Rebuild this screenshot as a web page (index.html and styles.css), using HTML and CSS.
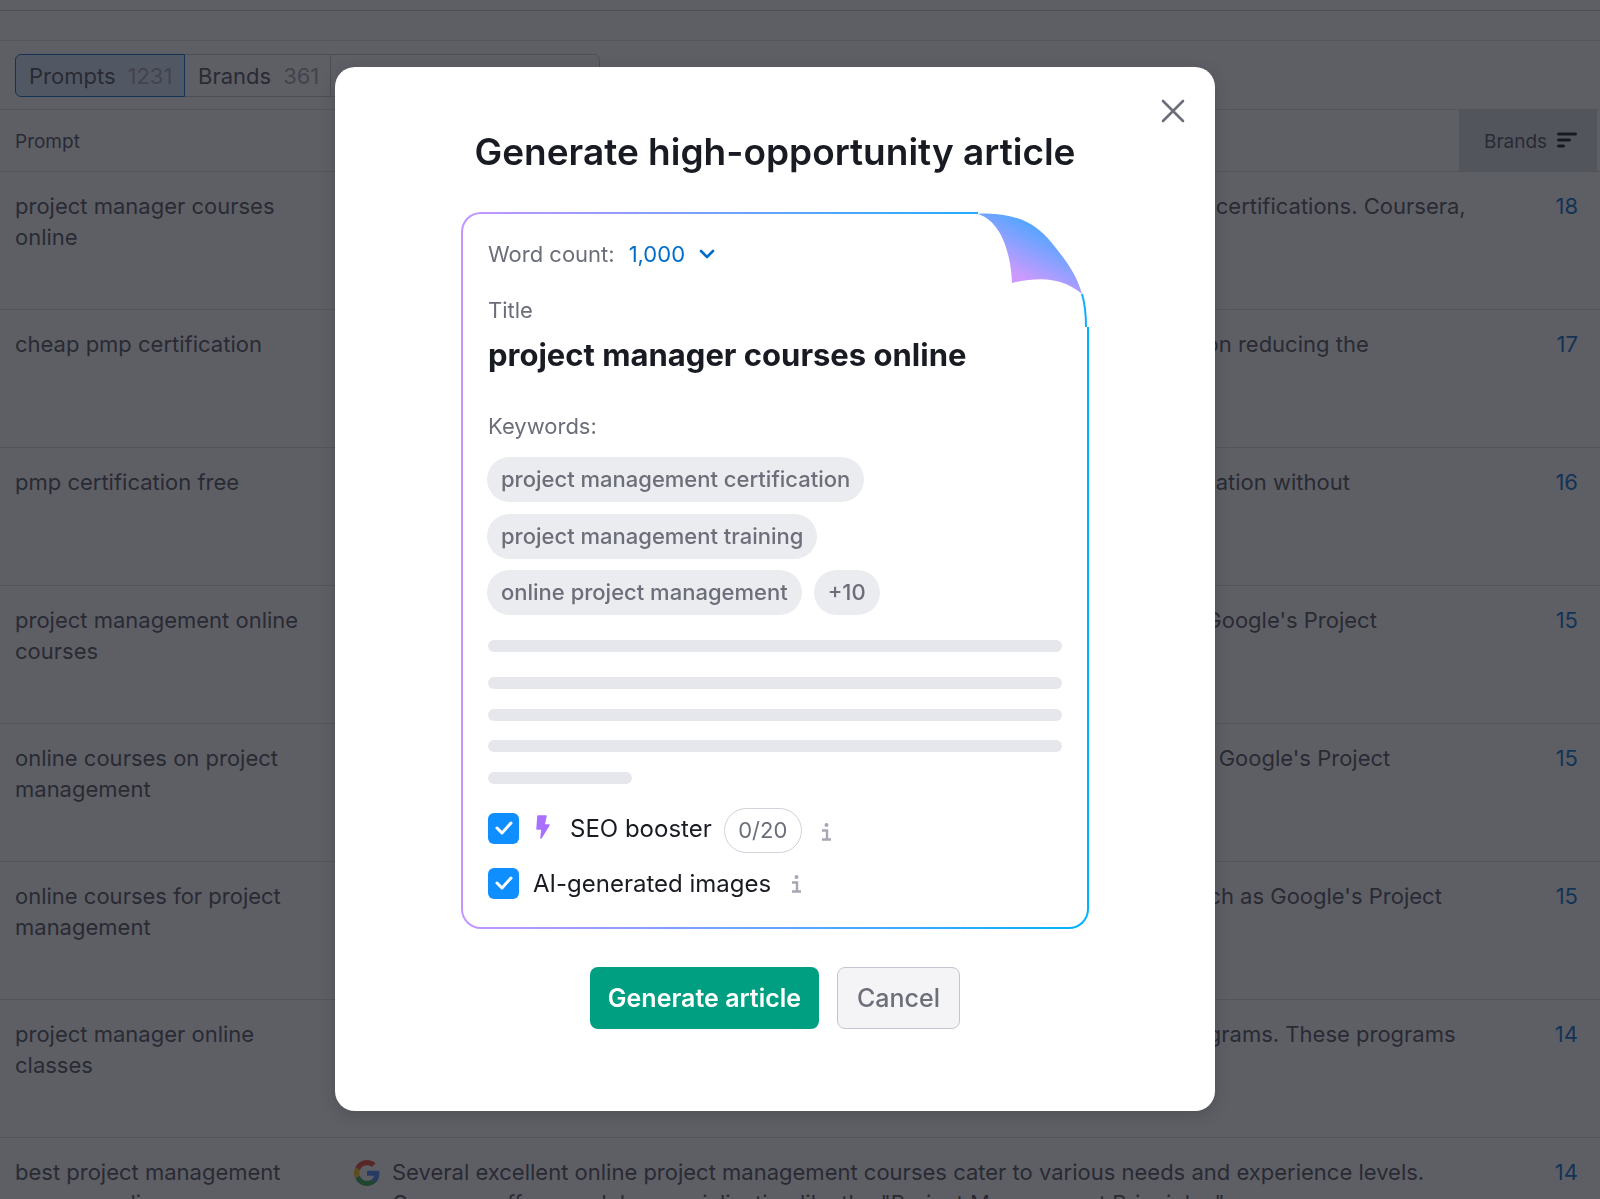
FILE: index.html
```html
<!DOCTYPE html>
<html lang="en">

<head>
  <meta charset="UTF-8">
  <title>Generate high-opportunity article</title>
  <link rel="stylesheet" href="styles.css">
</head>

<body>
  <div class="page">
    <div class="top-strip"></div>
    <div class="top-band"></div>
    <div class="tabs-row">
      <div class="tabs">
        <div class="tab tab-active">Prompts <span class="tab-count">1231</span></div>
        <div class="tab">Brands <span class="tab-count">361</span></div>
        <div class="tab tab-last">Sources</div>
      </div>
    </div>

    <div class="table-head">
      <div class="head-prompt">Prompt</div>
      <div class="head-brands">
        Brands
        <svg class="sort-icon" width="20" height="16" viewBox="0 0 20 16">
          <path d="M1.5 2h17M1.5 8h11M1.5 14h5" stroke="#16181f" stroke-width="3" stroke-linecap="round" fill="none"></path>
        </svg>
      </div>
    </div>

    <div class="row">
      <div class="prompt">project manager courses online</div>
      <div class="source"></div>
      <div class="answer">Many online platforms offer project manager courses with industry-recognized certifications. Coursera,<br>edX and Udemy all have programs</div>
      <div class="count">18</div>
    </div>
    <div class="row">
      <div class="prompt">cheap pmp certification</div>
      <div class="source"></div>
      <div class="answer">Cheap PMP certification options exist, with many training providers that focus on reducing the<br>overall cost of the exam</div>
      <div class="count">17</div>
    </div>
    <div class="row">
      <div class="prompt">pmp certification free</div>
      <div class="source"></div>
      <div class="answer">Free PMP study resources are widely available, but you cannot earn the certification without<br>paying the exam fee</div>
      <div class="count">16</div>
    </div>
    <div class="row">
      <div class="prompt">project management online courses</div>
      <div class="source"></div>
      <div class="answer">Many reputable platforms offer project management online courses, including Google's Project<br>Management Certificate</div>
      <div class="count">15</div>
    </div>
    <div class="row">
      <div class="prompt">online courses on project management</div>
      <div class="source"></div>
      <div class="answer">Online courses on project management are offered by many providers, such as Google's Project<br>Management Certificate</div>
      <div class="count">15</div>
    </div>
    <div class="row">
      <div class="prompt">online courses for project management</div>
      <div class="source"></div>
      <div class="answer">Popular online courses for project management come from many providers, such as Google's Project<br>Management Certificate</div>
      <div class="count">15</div>
    </div>
    <div class="row">
      <div class="prompt">project manager online classes</div>
      <div class="source"></div>
      <div class="answer">Several universities and platforms offer online project management degree programs. These programs<br>cover planning and scheduling<br><span class="cite">Project Management Institute, PMI</span></div>
      <div class="count">14</div>
    </div>
    <div class="row">
      <div class="prompt">best project management courses online</div>
      <div class="source">
        <svg width="26" height="26" viewBox="0 0 48 48">
          <path fill="#EA4335" d="M24 9.5c3.5 0 6.7 1.2 9.2 3.6l6.9-6.9C35.9 2.4 30.5 0 24 0 14.6 0 6.5 5.4 2.6 13.2l8 6.2C12.500 13.600 17.800 9.500 24 9.500z"></path>
          <path fill="#4285F4" d="M47 24.500c0-1.600-.1-3.100-.4-4.500H24v9h12.900c-.6 3-2.200 5.400-4.700 7.100l7.700 6C44.400 37.900 47 31.800 47 24.500z"></path>
          <path fill="#FBBC05" d="M10.500 28.600c-.5-1.400-.8-3-.8-4.600s.3-3.200.8-4.600l-8-6.200C.9 16.500 0 20.100 0 24s.9 7.500 2.600 10.800l7.900-6.200z"></path>
          <path fill="#34A853" d="M24 48c6.500 0 11.900-2.100 15.900-5.900l-7.700-6c-2.200 1.400-4.900 2.300-8.200 2.300-6.200 0-11.500-4.100-13.400-9.800l-8 6.200C6.500 42.600 14.600 48 24 48z"></path>
        </svg>
      </div>
      <div class="answer">Several excellent online project management courses cater to various needs and experience levels.<br>Coursera offers modular specialization like the "Project Management Principles"</div>
      <div class="count">14</div>
    </div>
  </div>

  <div class="overlay">
    <div class="modal">
      <svg class="close" width="24" height="24" viewBox="0 0 24 24">
        <path d="M2 2l20 20M22 2L2 22" stroke="#6c6e79" stroke-width="2.600" stroke-linecap="round" fill="none"></path>
      </svg>
      <h1 class="modal-title">Generate high-opportunity article</h1>

      <div class="card">
        <svg class="fold" width="116" height="115" viewBox="0 0 116 115">
          <defs>
            <linearGradient id="foldGrad" x1="0.35" y1="0.75" x2="0.75" y2="0.15">
              <stop offset="0" stop-color="#cc9aff"></stop>
              <stop offset="1" stop-color="#3ea8ff"></stop>
            </linearGradient>
          </defs>
          <path d="M5 0H116V115H113C112 78 94 50 78 30C62 10 40 0 5 2z" fill="#fff"></path>
          <path d="M5 2C40 0 62 10 78 30C92 47 104 63 109 82C95 70 75 62 39 71C38 45 30 10 5 2z" fill="url(#foldGrad)"></path>
          <path d="M109 82C112 92 113 100 113 115" stroke="#14aeff" stroke-width="2" fill="none"></path>
        </svg>

        <div class="word-count">
          Word count:
          <span class="word-value">1,000</span>
          <svg width="16" height="10" viewBox="0 0 16 10">
            <path d="M2 2l6 6 6-6" stroke="#006dca" stroke-width="2.600" stroke-linecap="round" stroke-linejoin="round" fill="none"></path>
          </svg>
        </div>

        <div class="label label-title">Title</div>
        <div class="article-title">project manager courses online</div>

        <div class="label label-keywords">Keywords:</div>
        <div class="chips">
          <span class="chip">project management certification</span>
          <span class="chip">project management training</span>
          <span class="chip">online project management</span>
          <span class="chip">+10</span>
        </div>

        <div class="skeleton">
          <div class="line line-first"></div>
          <div class="line"></div>
          <div class="line"></div>
          <div class="line"></div>
          <div class="line line-short"></div>
        </div>

        <div class="option">
          <span class="checkbox">
            <svg width="20" height="16" viewBox="0 0 20 16">
              <path d="M3 8l5 5 9-10" stroke="#fff" stroke-width="3" stroke-linecap="round" stroke-linejoin="round" fill="none"></path>
            </svg>
          </span>
          <svg class="bolt" width="15" height="26" viewBox="0 0 15 26">
            <path d="M2 2h8L8 11h5L5 24l1-9H1z" fill="#a970ff" stroke="#a970ff" stroke-width="1.500" stroke-linejoin="round"></path>
          </svg>
          <span class="option-text seo-text">SEO booster</span>
          <span class="pill">0/20</span>
          <svg class="info" width="10" height="18" viewBox="0 0 10 18">
            <circle cx="5.500" cy="2" r="2" fill="#a5a7b3"></circle>
            <path d="M1 7.500h5v8.500M1 16.500h9" stroke="#a5a7b3" stroke-width="2.400" fill="none"></path>
          </svg>
        </div>
        <div class="option option-images">
          <span class="checkbox">
            <svg width="20" height="16" viewBox="0 0 20 16">
              <path d="M3 8l5 5 9-10" stroke="#fff" stroke-width="3" stroke-linecap="round" stroke-linejoin="round" fill="none"></path>
            </svg>
          </span>
          <span class="option-text images-text">AI-generated images</span>
          <svg class="info info-images" width="10" height="18" viewBox="0 0 10 18">
            <circle cx="5.500" cy="2" r="2" fill="#a5a7b3"></circle>
            <path d="M1 7.500h5v8.500M1 16.500h9" stroke="#a5a7b3" stroke-width="2.400" fill="none"></path>
          </svg>
        </div>
      </div>

      <div class="buttons">
        <button class="btn btn-green">Generate article</button>
        <button class="btn btn-cancel">Cancel</button>
      </div>
    </div>
  </div>
</body>

</html>
```

FILE: styles.css
```css
* {
  margin: 0;
  padding: 0;
  box-sizing: border-box;
}

html,
body {
  width: 100%;
  height: 100%;
  overflow: hidden;
}

body {
  font-family: Inter, "Liberation Sans", sans-serif;
  font-size: 22px;
  color: #191b23;
  background: #fff;
}

/* page behind the dialog */
.page {
  height: 1199px;
  overflow: hidden;
  color: #4d4f59;
}

.top-strip {
  height: 11px;
  border-bottom: 1px solid #c4c6cf;
}

.top-band {
  height: 30px;
  border-bottom: 1px solid #e2e3e8;
}

.tabs-row {
  height: 69px;
  padding: 13px 0 0 15px;
  border-bottom: 1px solid #d8dae0;
}

.tabs {
  display: flex;
  width: 585px;
  height: 43px;
}

.tab {
  display: flex;
  align-items: center;
  gap: 12px;
  width: 146px;
  padding-left: 13px;
  border: 1px solid #c4c6cf;
  border-left: 0;
  white-space: nowrap;
}

.tab-active {
  width: 170px;
  border: 1px solid #006dca;
  border-radius: 6px 0 0 6px;
  background: #d6e8f9;
}

.tab-last {
  flex: 1;
  border-radius: 0 6px 6px 0;
}

.tab-count {
  color: #a0a2ad;
}

.table-head {
  display: flex;
  justify-content: space-between;
  height: 62px;
  font-size: 19px;
  border-bottom: 1px solid #d8dae0;
}

.head-prompt {
  padding: 20px 0 0 15px;
}

.head-brands {
  display: flex;
  gap: 10px;
  width: 138px;
  margin-right: 3px;
  padding: 20px 0 0 25px;
  background: #dbdce4;
}

.sort-icon {
  margin-top: 2px;
}

.row {
  display: grid;
  grid-template-columns: 354px 38px 1fr 100px;
  height: 138px;
  padding-top: 19px;
  line-height: 31px;
  border-bottom: 1px solid #d8dae0;
}

.prompt {
  padding: 0 34px 0 15px;
}

.source svg {
  display: block;
  margin-top: 3px;
}

.answer {
  white-space: nowrap;
}

.cite {
  border-bottom: 2px dotted #7b7d88;
}

.count {
  padding-right: 22px;
  text-align: right;
  color: #006dca;
}

/* dialog */
.overlay {
  position: fixed;
  left: 0;
  top: 0;
  width: 100%;
  height: 100%;
  padding: 67px 0 0 335px;
  background: rgba(25, 27, 35, 0.7);
}

.modal {
  position: relative;
  display: flex;
  flex-direction: column;
  align-items: center;
  width: 880px;
  height: 1044px;
  padding-top: 62px;
  border-radius: 20px;
  background: #fff;
  box-shadow: 0 4px 16px rgba(25, 27, 35, 0.2);
}

.close {
  position: absolute;
  right: 30px;
  top: 32px;
}

.modal-title {
  height: 46px;
  font-size: 37px;
  line-height: 46px;
  font-weight: 600;
  color: #191b23;
  white-space: nowrap;
}

.card {
  position: relative;
  width: 628px;
  height: 717px;
  margin-top: 37px;
  padding: 25px 25px 0;
  border: 2px solid transparent;
  border-radius: 20px;
  background: linear-gradient(#fff, #fff) padding-box, linear-gradient(90deg, #c496ff, #00b2ff) border-box;
}

.fold {
  position: absolute;
  right: -2px;
  top: -2px;
}

.word-count {
  display: flex;
  align-items: center;
  gap: 14px;
  height: 30px;
  line-height: 30px;
  color: #6c6e79;
}

.word-value {
  color: #006dca;
}

.label {
  height: 30px;
  line-height: 30px;
  color: #6c6e79;
}

.label-title {
  margin-top: 26px;
}

.article-title {
  height: 40px;
  margin-top: 10px;
  font-size: 31px;
  line-height: 40px;
  font-weight: 700;
  color: #191b23;
}

.label-keywords {
  margin-top: 36px;
}

.chips {
  display: flex;
  flex-wrap: wrap;
  gap: 11.500px 12px;
  width: 440px;
  margin: 16px 0 0 -1px;
}

.chip {
  height: 45px;
  padding: 0 14px;
  border-radius: 23px;
  line-height: 45px;
  font-weight: 500;
  color: #6c6e79;
  background: #ebecf0;
  white-space: nowrap;
}

.skeleton {
  margin-top: 25px;
}

.line {
  height: 12px;
  margin-bottom: 19.500px;
  border-radius: 6px;
  background: #e6e7ec;
}

.line-first {
  margin-bottom: 25px;
}

.line-short {
  width: 144px;
  margin-bottom: 29px;
}

.option {
  display: flex;
  align-items: flex-start;
  height: 31px;
  color: #191b23;
  line-height: 31px;
}

.option-images {
  margin-top: 24px;
}

.checkbox {
  display: flex;
  justify-content: center;
  align-items: center;
  width: 31px;
  height: 31px;
  border-radius: 6px;
  background: #0f8fff;
}

.bolt {
  margin-left: 17px;
  margin-top: 1px;
}

.seo-text {
  margin: 0 12px 0 19px;
  font-size: 24px;
}

.images-text {
  margin: 0 20px 0 14px;
  font-size: 24px;
}

.pill {
  flex: none;
  width: 78px;
  height: 45px;
  margin-top: -5px;
  border: 1px solid #d1d2da;
  border-radius: 23px;
  line-height: 43px;
  text-align: center;
  color: #6c6e79;
}

.info {
  margin: 10px 0 0 19px;
}

.info-images {
  margin: 7px 0 0 0;
}

.buttons {
  display: flex;
  gap: 18px;
  margin-top: 38px;
}

.btn {
  height: 62px;
  border-radius: 8px;
  font-family: inherit;
  font-size: 25px;
}

.btn-green {
  width: 229px;
  border: 0;
  font-weight: 600;
  color: #fff;
  background: #009f81;
}

.btn-cancel {
  width: 123px;
  border: 1px solid #c4c6cf;
  font-weight: 500;
  color: #6c6e79;
  background: #f4f4f6;
}
```
